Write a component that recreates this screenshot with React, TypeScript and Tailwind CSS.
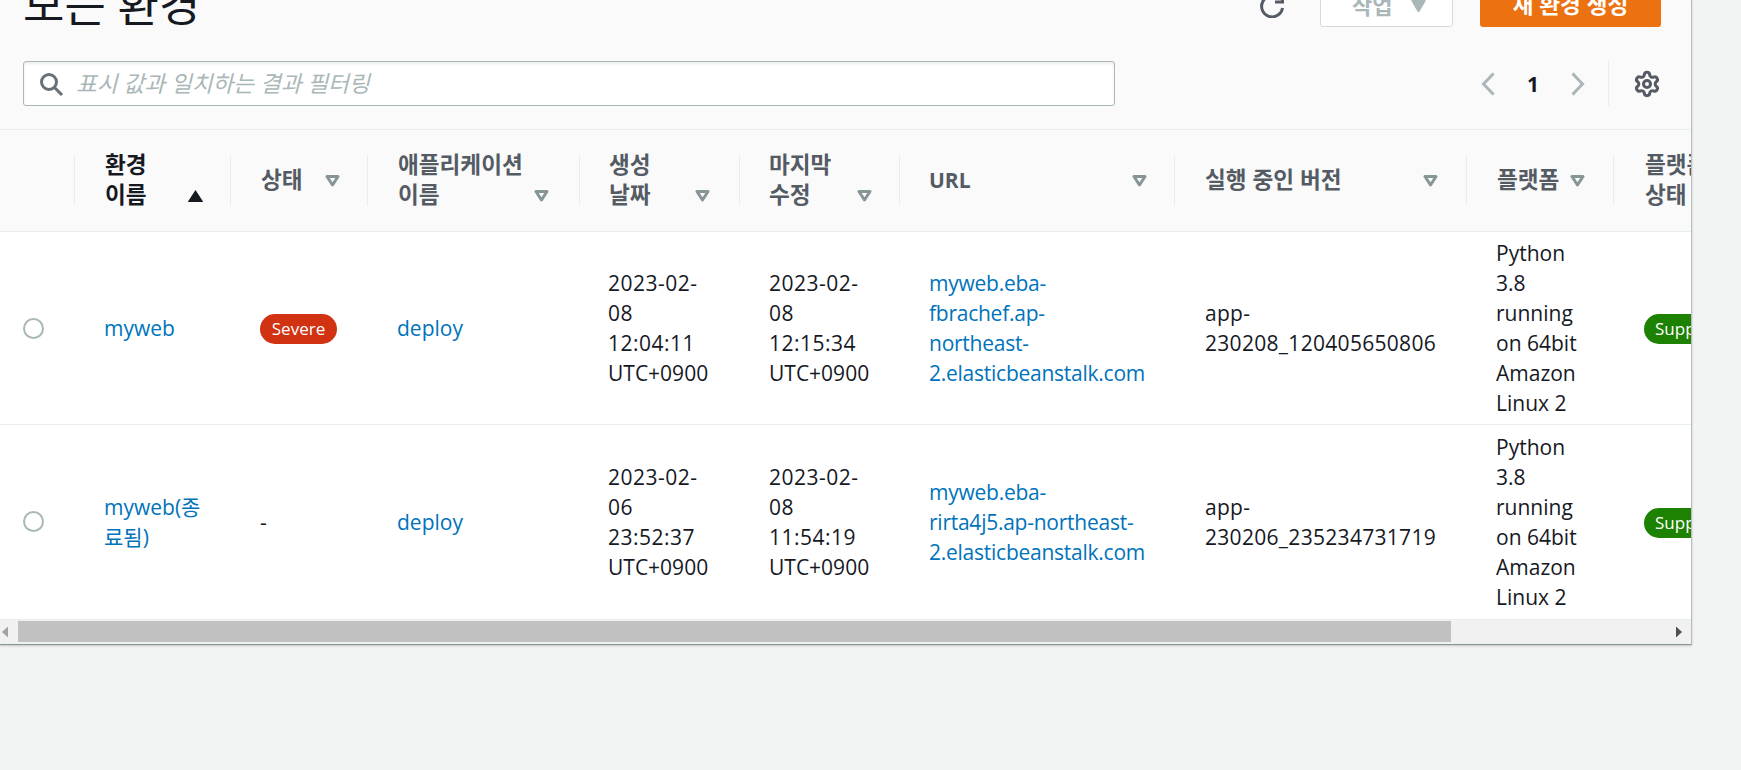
import { Settings } from "lucide-react";

const SANS = "font-['Open_Sans','Noto_Sans_CJK_KR',sans-serif]";

function Caret({ kind }: { kind: "open" | "sorted" | "disabled" }) {
  return (
    <svg width="15" height="12" viewBox="0 0 15 12" className="block shrink-0">
      {kind === "sorted" && <path d="M7.5 0 L15 11.5 Q15 12 14 12 L1 12 Q0 12 0 11.5 Z" fill="#16191f" />}
      {kind === "disabled" && <path d="M1 0 L14 0 Q15 0 14.6 1 L8.5 11.5 Q7.5 12.5 6.5 11.5 L0.4 1 Q0 0 1 0 Z" fill="#aab7b8" />}
      {kind === "open" && <path d="M2 1.5 L13 1.5 L7.5 10 Z" fill="none" stroke="#879596" strokeWidth="3" strokeLinejoin="round" />}
    </svg>
  );
}

type Col = { lines: string[]; col: string; pl: string; pr: string; dark?: boolean; sorted?: boolean; latin?: boolean };

const cols: Col[] = [
  { lines: ["환경", "이름"], col: "w-[156px]", pl: "pl-[30px]", pr: "pr-[27px]", dark: true, sorted: true },
  { lines: ["상태"], col: "w-[137px]", pl: "pl-[30px]", pr: "pr-[27px]" },
  { lines: ["애플리케이션", "이름"], col: "w-[212px]", pl: "pl-[30px]", pr: "pr-[30px]" },
  { lines: ["생성", "날짜"], col: "w-[160px]", pl: "pl-[29px]", pr: "pr-[29px]" },
  { lines: ["마지막", "수정"], col: "w-[160px]", pl: "pl-[29px]", pr: "pr-[27px]" },
  { lines: ["URL"], col: "w-[275px]", pl: "pl-[29px]", pr: "pr-[27px]", latin: true },
  { lines: ["실행 중인 버전"], col: "w-[292px]", pl: "pl-[30px]", pr: "pr-[28px]" },
  { lines: ["플랫폼"], col: "w-[147px]", pl: "pl-[30px]", pr: "pr-[28px]" },
];

const rows = [
  {
    name: "myweb",
    bad: true,
    app: "deploy",
    created: ["2023-02-", "08", "12:04:11", "UTC+0900"],
    updated: ["2023-02-", "08", "12:15:34", "UTC+0900"],
    url: ["myweb.eba-", "fbrachef.ap-", "northeast-", "2.elasticbeanstalk.com"],
    ver: ["app-", "230208_120405650806"],
    rowClass: "h-[193px] border-b border-[#eaeded] align-middle",
  },
  {
    name: "myweb(종\n료됨)",
    bad: false,
    app: "deploy",
    created: ["2023-02-", "06", "23:52:37", "UTC+0900"],
    updated: ["2023-02-", "08", "11:54:19", "UTC+0900"],
    url: ["myweb.eba-", "rirta4j5.ap-northeast-", "2.elasticbeanstalk.com"],
    ver: ["app-", "230206_235234731719"],
    rowClass: "h-[194px] align-middle",
  },
];

const Lines = ({ items }: { items: string[] }) => (
  <>
    {items.map((t) => (
      <div key={t} className="whitespace-nowrap">{t}</div>
    ))}
  </>
);

export default function App() {
  return (
    <div className={`h-[770px] w-[1741px] overflow-hidden bg-[#f2f3f3] text-[21px] leading-[30px] text-[#16191f] ${SANS}`}>
      <div className="w-[1692px] border-r border-b border-r-[#b4bfc0] border-b-[#879596] bg-white shadow-[0_1px_2px_rgba(0,0,0,0.2)]">
        <div className="h-[129px] bg-[#fafafa] pl-[23px] pr-[30px]">
          <div className="flex h-[27px] items-end">
            <div className="-mb-[4px] flex-1 text-[45px] leading-[52px]">모든 환경</div>
            <svg width="24" height="24" viewBox="0 0 24 24" fill="none" stroke="#545b64" strokeWidth="3" className="mb-[9px] mr-[36px] shrink-0">
              <path d="M22.5 14 A10.5 10.5 0 1 1 18.5 4" />
              <path d="M22.5 0 V8 H15" />
            </svg>
            <div className="mr-[27px] flex h-[45px] w-[133px] items-center gap-[19px] rounded-[3px] border border-[#d5dbdb] bg-white pl-[31px] text-[22px] font-bold text-[#aab7b8]">
              작업
              <div className="mt-[3px]">
                <Caret kind="disabled" />
              </div>
            </div>
            <div className="flex h-[45px] w-[181px] items-center justify-center rounded-[3px] bg-[#ec7211] text-[22.6px] font-bold text-white">
              새 환경 생성
            </div>
          </div>
          <div className="mt-[34px] flex h-[45px] items-center">
            <div className="flex h-[45px] w-[1093px] items-center gap-[12px] rounded-[3px] border border-[#aab7b8] bg-white pl-[16px] shadow-[inset_0_2px_3px_rgba(0,0,0,0.08)]">
              <svg width="24" height="24" viewBox="0 0 24 24" fill="none" stroke="#687078" strokeWidth="3">
                <circle cx="9" cy="10" r="7.5" />
                <path d="M14.5 15.5 L22 23" />
              </svg>
              <span className="text-[22.6px] italic text-[#aab7b8]">표시 값과 일치하는 결과 필터링</span>
            </div>
            <div className="ml-[365px] flex items-center">
              <svg width="16" height="24" viewBox="0 0 16 24" fill="none" stroke="#aab7b8" strokeWidth="3">
                <path d="M13.5 1.5 L3.5 12 L13.5 22.5" />
              </svg>
              <span className="ml-[31px] mr-[31px] font-bold">1</span>
              <svg width="16" height="24" viewBox="0 0 16 24" fill="none" stroke="#aab7b8" strokeWidth="3">
                <path d="M2.5 1.5 L12.5 12 L2.5 22.5" />
              </svg>
            </div>
            <div className="ml-[22px] flex h-[45px] items-center border-l border-[#eaeded] pl-[24px]">
              <Settings size={28} strokeWidth={2.6} color="#545b64" />
            </div>
          </div>
        </div>
        <div className="overflow-hidden">
          <table className="w-[1818px] table-fixed border-collapse">
            <colgroup>
              <col className="w-[74px]" />
              {cols.map((c) => (
                <col key={c.lines[0]} className={c.col} />
              ))}
              <col className="w-[205px]" />
            </colgroup>
            <thead>
              <tr className="h-[102px] border-y border-[#eaeded] bg-[#fafafa] font-bold text-[#545b64]">
                <th />
                {cols.map((c) => (
                  <th key={c.lines[0]} className="p-0 text-left font-bold">
                    <div className={`flex h-[51px] items-center justify-between border-l border-[#eaeded] ${c.pl} ${c.pr} ${c.dark ? "text-[#16191f]" : ""}`}>
                      <div className={`-mt-[2px] ${c.latin ? "" : "text-[22.6px]"}`}>
                        <Lines items={c.lines} />
                      </div>
                      <div className={c.lines.length > 1 ? "self-end pb-[4px]" : ""}>
                        <Caret kind={c.sorted ? "sorted" : "open"} />
                      </div>
                    </div>
                  </th>
                ))}
                <th className="p-0 text-left font-bold">
                  <div className="flex h-[51px] items-center border-l border-[#eaeded] pl-[31px] text-[22.6px]">
                    <div className="-mt-[2px]">
                      <div className="whitespace-nowrap">플랫폼</div>
                      <div>상태</div>
                    </div>
                  </div>
                </th>
              </tr>
            </thead>
            <tbody>
              {rows.map((r) => (
                <tr key={r.created[2]} className={r.rowClass}>
                  <td className="p-0">
                    <div className="ml-[23px] h-[21px] w-[21px] rounded-full border-2 border-[#aab7b8] bg-white" />
                  </td>
                  <td className="whitespace-pre-line pl-[30px] pr-[20px] text-[#0073bb]">{r.name}</td>
                  <td className="pl-[30px]">
                    {r.bad ? (
                      <span className="inline-flex h-[30px] w-[77px] items-center justify-center rounded-full bg-[#d13212] text-[17px] font-medium text-white">
                        Severe
                      </span>
                    ) : (
                      "-"
                    )}
                  </td>
                  <td className="pl-[30px] text-[#0073bb]">{r.app}</td>
                  <td className="pl-[29px] tracking-[0.5px] [&>div:last-child]:tracking-normal">
                    <Lines items={r.created} />
                  </td>
                  <td className="pl-[30px] tracking-[0.5px] [&>div:last-child]:tracking-normal">
                    <Lines items={r.updated} />
                  </td>
                  <td className="pl-[30px] tracking-[-0.25px] text-[#0073bb]">
                    <Lines items={r.url} />
                  </td>
                  <td className="pl-[31px] tracking-[0.3px]">
                    <Lines items={r.ver} />
                  </td>
                  <td className="pl-[30px]">
                    <Lines items={["Python", "3.8", "running", "on 64bit", "Amazon", "Linux 2"]} />
                  </td>
                  <td className="pl-[31px]">
                    <span className="inline-flex h-[30px] w-[140px] items-center rounded-full bg-[#1d8102] pl-[11px] text-[17px] font-medium text-white">
                      Supported
                    </span>
                  </td>
                </tr>
              ))}
            </tbody>
          </table>
        </div>
        <div className="flex h-[25px] items-center border-t border-[#eaeded] bg-[#f1f1f1]">
          <svg width="18" height="24" viewBox="0 0 18 24" fill="#a3a3a3" className="shrink-0">
            <path d="M2 12 L8 6.5 L8 17.5 Z" />
          </svg>
          <div className="h-[21px] w-[1433px] bg-[#c1c1c1]" />
          <div className="flex-1" />
          <svg width="15" height="24" viewBox="0 0 15 24" fill="#505050" className="shrink-0">
            <path d="M0 6.5 L6 12 L0 17.5 Z" />
          </svg>
        </div>
      </div>
    </div>
  );
}
